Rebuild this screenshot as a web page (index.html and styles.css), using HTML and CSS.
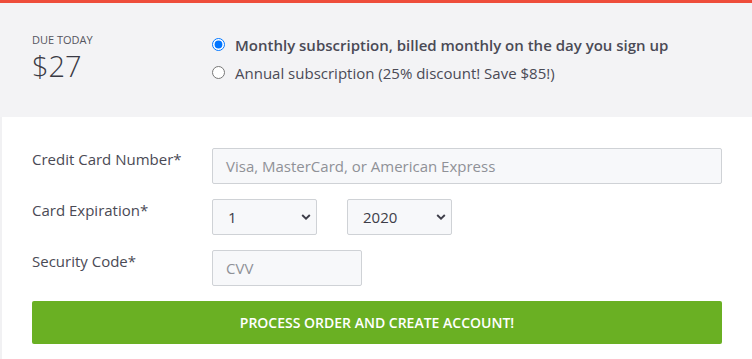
FILE: index.html
```html
<!DOCTYPE html>
<html>
<head>
<meta charset="utf-8">
<link rel="stylesheet" href="styles.css">
</head>
<body>
<div class="topbar"></div>
<section class="summary">
  <div class="due">
    <div class="due-label">DUE TODAY</div>
    <div class="due-amount">$27</div>
  </div>
  <div class="plans">
    <label class="plan plan-selected"><input class="radio" type="radio" name="plan" checked>Monthly subscription, billed monthly on the day you sign up</label>
    <label class="plan"><input class="radio" type="radio" name="plan">Annual subscription (25% discount! Save $85!)</label>
  </div>
</section>
<section class="form">
  <div class="row">
    <div class="label">Credit Card Number*</div>
    <div class="field"><div class="input input-full placeholder">Visa, MasterCard, or American Express</div></div>
  </div>
  <div class="row">
    <div class="label">Card Expiration*</div>
    <div class="field field-selects">
      <div class="input select"><span>1</span><svg class="chev" width="10" height="6" viewBox="0 0 10 6"><path d="M1.2 1 L5 4.6 L8.8 1" fill="none" stroke="#3d3d48" stroke-width="1.9"/></svg></div>
      <div class="input select"><span>2020</span><svg class="chev" width="10" height="6" viewBox="0 0 10 6"><path d="M1.2 1 L5 4.6 L8.8 1" fill="none" stroke="#3d3d48" stroke-width="1.9"/></svg></div>
    </div>
  </div>
  <div class="row">
    <div class="label">Security Code*</div>
    <div class="field"><div class="input input-cvv placeholder">CVV</div></div>
  </div>
  <button class="submit">PROCESS ORDER AND CREATE ACCOUNT!</button>
</section>
</body>
</html>
```
FILE: styles.css
```css
* { box-sizing: border-box; }
html, body { margin: 0; padding: 0; background: #ffffff; }
body {
  font-family: "Open Sans", "Liberation Sans", sans-serif;
  color: #464652;
  width: 752px;
  height: 359px;
  overflow: hidden;
}
.topbar { height: 3px; background: #ee4d3b; }
.summary {
  background: #f3f3f5;
  height: 114px;
  display: grid;
  grid-template-columns: 180px 1fr;
  padding: 30px 30px 0 32px;
}
.due-label { font-size: 11px; line-height: 13px; color: #555560; }
.due-amount { font-size: 29px; font-weight: 300; line-height: 40px; color: #3a3a44; }
.plans { display: flex; flex-direction: column; gap: 8px; padding-top: 2px; }
.plan { display: flex; align-items: center; font-size: 15px; line-height: 20px; height: 20px; color: #4a4a55; }
.plan-selected { font-weight: 600; }
.radio {
  width: 13px; height: 13px;
  margin: 0 10px 0 0;
  flex: none;
  position: relative;
  top: -1px;
}
.form {
  border-left: 2px solid #f1f1f3;
  padding: 31px 30px 15px 30px;
  display: flex;
  flex-direction: column;
  gap: 15px;
}
.row { display: grid; grid-template-columns: 180px 1fr; }
.label { font-size: 15px; line-height: 22px; color: #4a4a55; }
.field-selects { display: flex; gap: 30px; }
.input {
  height: 36px;
  border: 1px solid #cfd2d6;
  border-radius: 2px;
  background: #f7f8fa;
  font-size: 15px;
  display: flex; align-items: center;
  padding: 0 13px;
  color: #3d3d48;
}
.placeholder { color: #8f9197; }
.input-full { width: 510px; }
.input-cvv { width: 150px; }
.select { width: 105px; justify-content: space-between; padding: 0 5px 0 15px; }
.chev { display: block; }
.submit {
  height: 43px;
  background: #6ab023;
  border: none;
  border-radius: 2px;
  color: #ffffff;
  font-family: "Open Sans", "Liberation Sans", sans-serif;
  font-weight: 600;
  font-size: 14px;
  width: 690px;
  padding: 0;
}
```
